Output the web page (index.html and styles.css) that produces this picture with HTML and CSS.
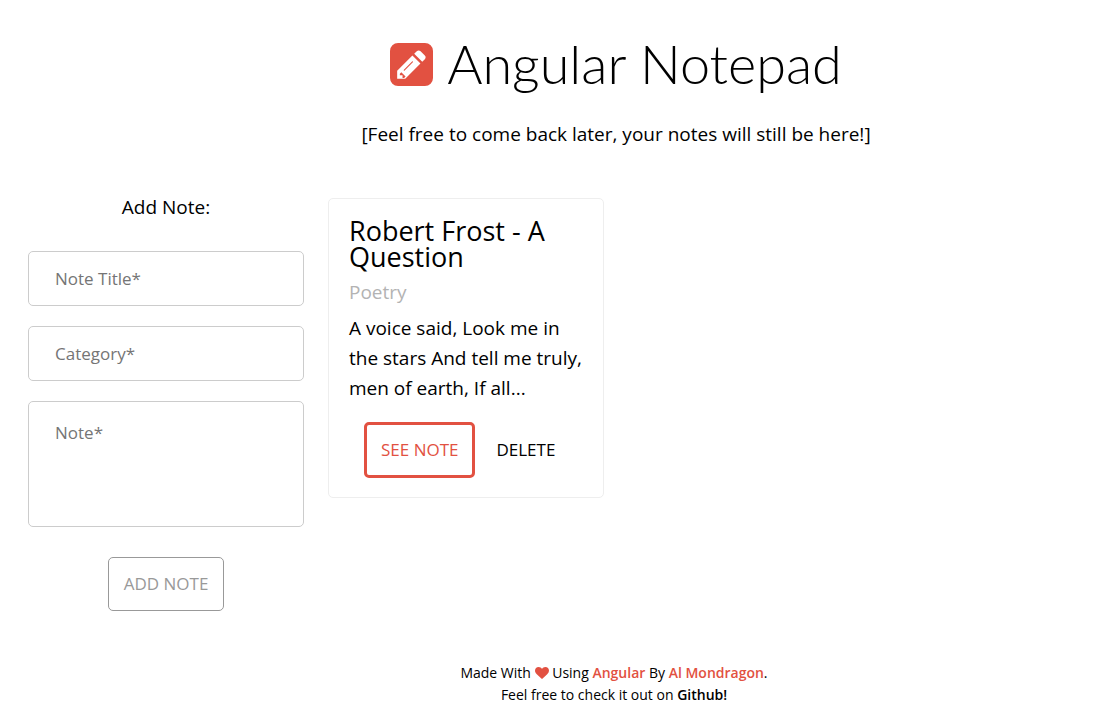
FILE: index.html
```html
<!DOCTYPE html>
<html lang="en">
<head>
<meta charset="utf-8">
<title>Angular Notepad</title>
<link rel="stylesheet" href="styles.css">
</head>
<body>
<header class="header">
  <h1 class="title">
    <svg class="logo" viewBox="0 0 1536 1536" aria-hidden="true"><path fill="currentColor" d="M404 1044l152 152-52 52h-56v-96h-96v-56zM818 658q14 13-3 30l-291 291q-17 17-30 3-14-13 3-30l291-291q17-17 30-3zM544 1280l544-544-288-288-544 544v288h288zM1152 672l92-92q28-28 28-68t-28-68l-152-152q-28-28-68-28t-68 28l-92 92zM1536 288v960q0 119-84.500 203.500t-203.500 84.500h-960q-119 0-203.500-84.500t-84.500-203.500v-960q0-119 84.500-203.500t203.500-84.500h960q119 0 203.500 84.500t84.500 203.500z"/></svg>
    <span>Angular Notepad</span>
  </h1>
  <p class="tagline">[Feel free to come back later, your notes will still be here!]</p>
</header>
<main class="main">
  <form class="form">
    <h2 class="form-title">Add Note:</h2>
    <input class="field" type="text" placeholder="Note Title*" aria-label="Note Title">
    <input class="field" type="text" placeholder="Category*" aria-label="Category">
    <textarea class="field field-note" placeholder="Note*" aria-label="Note"></textarea>
    <button class="button button-add" type="button">ADD NOTE</button>
  </form>
  <section class="notes">
    <article class="card">
      <h3 class="card-title">Robert Frost - A Question</h3>
      <p class="category">Poetry</p>
      <p class="excerpt">A voice said, Look me in the stars And tell me truly, men of earth, If all...</p>
      <div class="actions">
        <button class="button button-see" type="button">SEE NOTE</button>
        <button class="button button-delete" type="button">DELETE</button>
      </div>
    </article>
  </section>
</main>
<footer class="footer">
  <p>Made With <svg class="heart" viewBox="0 0 1792 1536" aria-label="love"><path fill="currentColor" d="M896 1536q-26 0-44-18l-624-602q-10-8-27.500-26t-55.500-65.500-68-97.500-53.500-121-23.500-138q0-220 127-344t351-124q62 0 126.500 21.500t120 58 95.500 68.500 76 68q36-36 76-68t95.500-68.500 120-58 126.500-21.500q224 0 351 124t127 344q0 221-229 450l-623 600q-18 18-44 18z"/></svg> Using <a class="link" href="#">Angular</a> By <a class="link" href="#">Al Mondragon</a>.</p>
  <p>Feel free to check it out on <a class="link link-dark" href="#">Github!</a></p>
</footer>
</body>
</html>
```
FILE: styles.css
```css
* { box-sizing: border-box; }
body {
  margin: 0;
  color: #000;
  background: #fff;
  font-family: "Open Sans", "Noto Sans", sans-serif;
  font-size: 19px;
}
h1, h2, h3, p { margin: 0; font-weight: 400; }
.header { padding: 33px 0 0 118px; text-align: center; }
.title {
  display: flex;
  justify-content: center;
  align-items: center;
  gap: 14px;
  font: 300 54px/62px Lato, sans-serif;
}
.logo { width: 43px; height: 43px; color: #e25141; }
.tagline { margin-top: 24px; line-height: 30px; }
.main {
  display: grid;
  grid-template-columns: 276px 1fr;
  gap: 24px;
  padding: 49px 2px 0 28px;
  align-items: start;
}
.form { display: flex; flex-direction: column; }
.form-title { margin-bottom: 35px; font-size: 19px; line-height: 18px; text-align: center; }
.field {
  width: 100%;
  height: 55px;
  margin: 0 0 20px;
  padding: 0 26px;
  border: 1px solid #ccc;
  border-radius: 5px;
  font: 17px/24px "Open Sans", sans-serif;
}
.field::placeholder { color: #757575; }
.field-note { height: 126px; margin-bottom: 30px; padding-top: 19px; resize: none; }
.button {
  border: 0;
  border-radius: 5px;
  background: none;
  font: 17px/24px "Open Sans", sans-serif;
}
.button-add { align-self: center; padding: 14px 15px; border: 1px solid #999; color: #999; }
.notes { display: grid; grid-template-columns: repeat(auto-fill, 276px); }
.card { padding: 19px 18px 19px 20px; border: 1px solid #eee; border-radius: 5px; }
.card-title { font-size: 27px; line-height: 26px; }
.category { margin-top: 7px; line-height: 30px; color: #b3b3b3; }
.excerpt { margin-top: 6px; line-height: 30px; }
.actions { display: flex; margin-top: 19px; padding-left: 15px; }
.button-see { padding: 13px 14px; border: 3px solid #e25141; color: #e25141; }
.button-delete { padding: 16px 21px; }
.footer { padding: 51px 0 0 114px; font-size: 14px; line-height: 22px; text-align: center; }
.heart { width: 14px; height: 12px; vertical-align: -1px; color: #e25141; }
.link { color: #e25141; font-weight: 600; text-decoration: none; }
.link-dark { color: #000; }
```
